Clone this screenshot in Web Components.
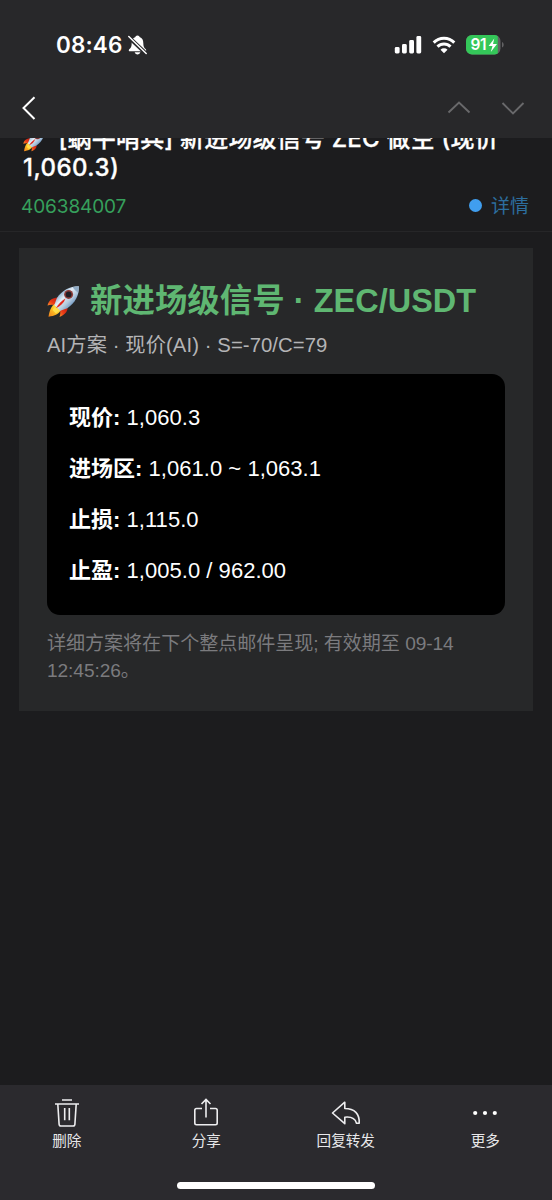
<!DOCTYPE html>
<html lang="zh-CN">
<head>
<meta charset="utf-8">
<meta name="viewport" content="width=device-width">
<title>邮件</title>
<style>
html,body{margin:0;background:#1c1c1e}
body{width:552px;height:1200px;overflow:hidden;color:#fff;font-family:Inter,"Noto Sans CJK SC",sans-serif}
</style>
</head>
<body>
<mail-app></mail-app>
<script>
const define = (name, html) => {
  const t = document.createElement('template');
  t.innerHTML = html;
  customElements.define(name, class extends HTMLElement {
    constructor() {
      super();
      this.attachShadow({mode: 'open'}).append(t.content.cloneNode(true));
    }
  });
};

define('rocket-icon', `
<style>:host{display:block;width:33px;height:33px}svg{display:block;width:100%;height:100%}</style>
<svg viewBox="0 0 33 33" role="img" aria-label="火箭">
  <defs>
    <linearGradient id="hull" x1="0" y1="0" x2="1" y2="1"><stop offset=".15" stop-color="#4f86b5"/><stop offset=".42" stop-color="#e4edf5"/><stop offset=".6" stop-color="#b4cadf"/><stop offset=".85" stop-color="#4377ad"/></linearGradient>
    <linearGradient id="flame" x1="1" y1="0" x2="0" y2="1"><stop offset="0" stop-color="#fff3a0"/><stop offset=".5" stop-color="#ffc823"/><stop offset="1" stop-color="#f0801c"/></linearGradient>
    <linearGradient id="fin" x1="1" y1="0" x2="0" y2="1"><stop offset="0" stop-color="#b51612"/><stop offset=".6" stop-color="#ec3c16"/><stop offset="1" stop-color="#f9902a"/></linearGradient>
  </defs>
  <path d="M12 12.500C6 12.500 2 14.500.5 20.500c2.600-1 6-1 9.500 0z" fill="url(#fin)"/>
  <path d="M20.500 20.500c.8 5-1.700 9-8 11.500 1-2.500 1-5 .3-8z" fill="url(#fin)"/>
  <path d="M9 18.500C4 20.500 2.500 26 1.500 31.700c6-.7 11-2.700 12.700-7.700z" fill="url(#flame)"/>
  <path d="M31.800 1.200c.5 9-3.500 16.500-11.500 22l-7 2.600-6-5.800 2.600-7C15 5.200 22.500 1.200 31.800 1.200z" fill="url(#hull)"/>
  <path d="M31.800 1.200c.1 2.400-.2 4.400-.7 6.500-2-1.200-4-3.200-5.500-5.600 2-.6 4-.9 6.200-.9z" fill="#8faac4"/>
  <circle cx="21.600" cy="9.400" r="4.500" fill="#8d3c38"/><circle cx="21.600" cy="9.400" r="2.900" fill="#201e25"/>
  <path d="M8 21.500 12.300 25.500 9 28.500 5.500 25z" fill="#ffe04a"/>
  <path d="M18.500 13.500C15 15.500 11.300 19 8.900 23.300c4.500-2 8-5.300 9.600-9.800z" fill="#e42a20"/>
</svg>`);

define('status-bar', `
<style>
:host{display:flex;height:90px;box-sizing:border-box;padding:0 48px 0 56px;align-items:center;justify-content:space-between}
.l,.r{display:flex;align-items:center}
.t{font:600 22.500px/30px Inter,sans-serif;letter-spacing:.15px;width:66px;white-space:nowrap}
svg{display:block}
.bell{margin-left:6px}
.sig{margin-right:10px}.wifi{margin-right:10px}
.bat{display:grid;width:38px;height:20px}
.bat>*{grid-area:1/1}
.n{display:flex;width:33px;justify-content:flex-start;padding-left:4.500px;font:600 15.500px/20px Inter,sans-serif;letter-spacing:-.3px}
</style>
<div class="l"><span class="t">08:46</span>
<svg class="bell" width="19" height="20" viewBox="0 0 19 20"><path d="M9.500.5c-1.300 0-2 .8-2.100 1.600C4.700 3 3.700 5.200 3.700 8c0 3.500-.8 4.800-2.500 6.200-.8.800-.5 2.100.7 2.100h15.300c1.100 0 1.400-1.300.6-2.100-1.700-1.400-2.500-2.700-2.500-6.200 0-2.800-1-5-3.700-5.900C11.500 1.300 10.800.5 9.500.5zM6.700 17.300c.3 1.300 1.500 2.200 2.800 2.200s2.500-.9 2.800-2.200z" fill="#fff"/><path d="M-.3 1.200 18.800 19.200" stroke="#28282a" stroke-width="4"/><path d="M.8 1.500 18.200 18.500" stroke="#fff" stroke-width="1.500" stroke-linecap="round"/></svg></div>
<div class="r">
<svg class="sig" width="28" height="18" viewBox="0 0 28 18" fill="#fff"><rect x=".8" y="11" width="4.800" height="6.500" rx="1.400"/><rect x="8" y="8" width="4.800" height="9.500" rx="1.400"/><rect x="15.200" y="4" width="4.800" height="13.500" rx="1.400"/><rect x="22.400" y="0" width="4.800" height="17.500" rx="1.400"/></svg>
<svg class="wifi" width="24" height="18" viewBox="0 0 24 18" fill="none" stroke="#fff" stroke-width="3"><path d="M1.700 6.600a14.600 14.600 0 0 1 20.600 0"/><path d="M5.500 10.600a9.200 9.200 0 0 1 13 0"/><path d="M12 17.200 8.500 13.700a5 5 0 0 1 7 0z" fill="#fff" stroke="none"/></svg>
<div class="bat"><svg width="38" height="20" viewBox="0 0 38 20"><defs><clipPath id="c"><rect width="34.500" height="19.500" rx="6"/></clipPath></defs><g clip-path="url(#c)"><rect width="35" height="20" fill="#626264"/><rect width="31.800" height="20" fill="#34c759"/></g><path d="M36 7c2.200.8 2.200 4.800 0 5.600z" fill="#626264"/><path d="M28.300 3.500 22.600 11h3.900l-1.700 6 6.200-8h-4z" fill="#fff"/></svg><span class="n">91</span></div>
</div>`);

define('nav-bar', `
<style>:host{display:flex;height:48px;box-sizing:border-box;padding:0 27px 12px 21px;align-items:center;justify-content:space-between}svg{display:block}.r{display:flex;gap:30px}</style>
<svg width="15" height="24" viewBox="0 0 15 24" fill="none" stroke="#fff" stroke-width="2"><path d="M13.500 1.200 2.500 12l11 11"/></svg>
<div class="r">
<svg width="24" height="14" viewBox="0 0 24 14" fill="none" stroke="#69696b" stroke-width="1.900"><path d="M1.500 11.500 12 1.500l10.500 10"/></svg>
<svg width="24" height="14" viewBox="0 0 24 14" fill="none" stroke="#69696b" stroke-width="1.900"><path d="M1.500 2 12 12.500 22.500 2"/></svg>
</div>`);

define('mail-subject', `
<style>
:host{display:block;height:94px;overflow:hidden;border-bottom:1px solid #262628;box-sizing:border-box}
.s{margin:-14px 0 0;padding-left:22px;font:500 24px/29px Inter,"Noto Sans CJK SC",sans-serif;white-space:nowrap}
.a{display:flex;letter-spacing:.2px}.a rocket-icon{width:22px;height:22px;margin:5.500px 14px 0 .5px;flex:none}
.a span{-webkit-text-stroke:.3px #fff}
.b{margin-left:1px;letter-spacing:.45px;-webkit-text-stroke:.3px #fff}
.m{display:flex;align-items:center;justify-content:space-between;height:49px;padding:0 23px 0 21px;font:400 19px/28px Inter,"Noto Sans CJK SC",sans-serif;color:#36a05c}
.d{display:flex;align-items:center;color:#2c6e9f;gap:9px}.d i{width:13px;height:13px;margin-top:-1.500px;border-radius:50%;background:#409eef}
.n{letter-spacing:-.1px;margin-top:1px}
</style>
<div class="s"><div class="a"><rocket-icon></rocket-icon><span>[蜗牛哨兵] 新进场级信号 ZEC 做空 (现价</span></div><div class="b">1,060.3)</div></div>
<div class="m"><span class="n">406384007</span><span class="d"><i></i><span>详情</span></span></div>`);

define('signal-row', `
<style>:host{display:block;font-size:22px;line-height:51px;white-space:nowrap;letter-spacing:.03px}b{font-weight:700}</style>
<b><slot name="k"></slot></b> <slot></slot>`);

define('signal-card', `
<style>
:host{display:block;box-sizing:border-box;margin:16px 19px 0;height:463px;padding:31.500px 28px 0;background:#272829;font-family:"Liberation Sans","Noto Sans CJK SC",sans-serif}
h1{display:flex;margin:0;font-size:32.400px;line-height:42px;font-weight:700;letter-spacing:.06px;color:#5fb772;white-space:nowrap}
h1 rocket-icon{margin:5px 10px 0 0;flex:none}
.sub{margin-top:9px;font-size:20.300px;line-height:28px;letter-spacing:.08px;color:#b4b4b6;white-space:nowrap}
.box{margin-top:15.500px;height:241px;box-sizing:border-box;padding:17.500px 22px;border-radius:13px;background:#000}
.note{margin-top:15px;font-size:19.100px;line-height:27px;letter-spacing:-.07px;color:#7b7b7e;white-space:nowrap}
</style>
<h1><rocket-icon></rocket-icon><span>新进场级信号 · ZEC/USDT</span></h1>
<div class="sub">AI方案 · 现价(AI) · S=-70/C=79</div>
<div class="box"><slot></slot></div>
<div class="note">详细方案将在下个整点邮件呈现; 有效期至 09-14<br>12:45:26。</div>`);

define('tool-item', `
<style>:host{display:flex;flex:1;flex-direction:column;align-items:center;color:#e8e8ea;font:400 14.600px/20px Inter,"Noto Sans CJK SC",sans-serif}
.i{height:33px;margin-bottom:2px;display:flex;align-items:center}::slotted(svg){display:block;fill:none;stroke:#ededef;stroke-width:1.600}</style>
<div class="i"><slot name="icon"></slot></div><slot></slot>`);

define('tool-bar', `
<style>:host{display:flex;flex-direction:column;height:115px;background:#2b2a2e;align-items:center}
.t{display:flex;width:558px;padding-top:11px;height:86px}
.h{width:198px;height:7px;border-radius:4px;background:#fff}</style>
<div class="t"><slot></slot></div><div class="h"></div>`);

define('mail-app', `
<style>
:host{display:flex;flex-direction:column;height:1200px}
header{height:138px;background:#28282a;flex:none}
main{flex:1;min-height:0}
</style>
<header><status-bar></status-bar><nav-bar></nav-bar></header>
<main><mail-subject></mail-subject>
<signal-card>
<signal-row><span slot="k">现价:</span>1,060.3</signal-row>
<signal-row><span slot="k">进场区:</span>1,061.0 ~ 1,063.1</signal-row>
<signal-row><span slot="k">止损:</span>1,115.0</signal-row>
<signal-row><span slot="k">止盈:</span>1,005.0 / 962.00</signal-row>
</signal-card></main>
<tool-bar>
<tool-item><svg slot="icon" width="26" height="30" viewBox="0 0 26 30"><path d="M8 2h10M1 6h24M3.800 6l1.300 20.200q.1 1.800 1.900 1.800h12q1.800 0 1.900-1.800L22.200 6M10.700 10v12.300M15.300 10v12.300"/></svg>删除</tool-item>
<tool-item><svg slot="icon" width="26" height="30" viewBox="0 0 26 30"><path d="M9 10.500H3.500Q1.800 10.500 1.800 12.200V25q0 1.700 1.700 1.700h19q1.700 0 1.700-1.700V12.200q0-1.700-1.700-1.700H17M13 19.500V2M8.500 6 13 1.500 17.500 6"/></svg>分享</tool-item>
<tool-item><svg slot="icon" width="30" height="26" viewBox="0 0 30 26"><path stroke-linejoin="round" d="M13.800 2.200 1.500 13l12.300 10.700v-6.500c6.500-.7 10.500 1.600 11.700 6h2.700C28.700 14 23.700 8.500 13.800 8.500z"/></svg>回复转发</tool-item>
<tool-item><svg slot="icon" width="26" height="30" viewBox="0 0 26 30"><g fill="#fff" stroke="none"><circle cx="3.200" cy="15" r="2.100"/><circle cx="13" cy="15" r="2.100"/><circle cx="22.800" cy="15" r="2.100"/></g></svg>更多</tool-item>
</tool-bar>`);
</script>
</body>
</html>
